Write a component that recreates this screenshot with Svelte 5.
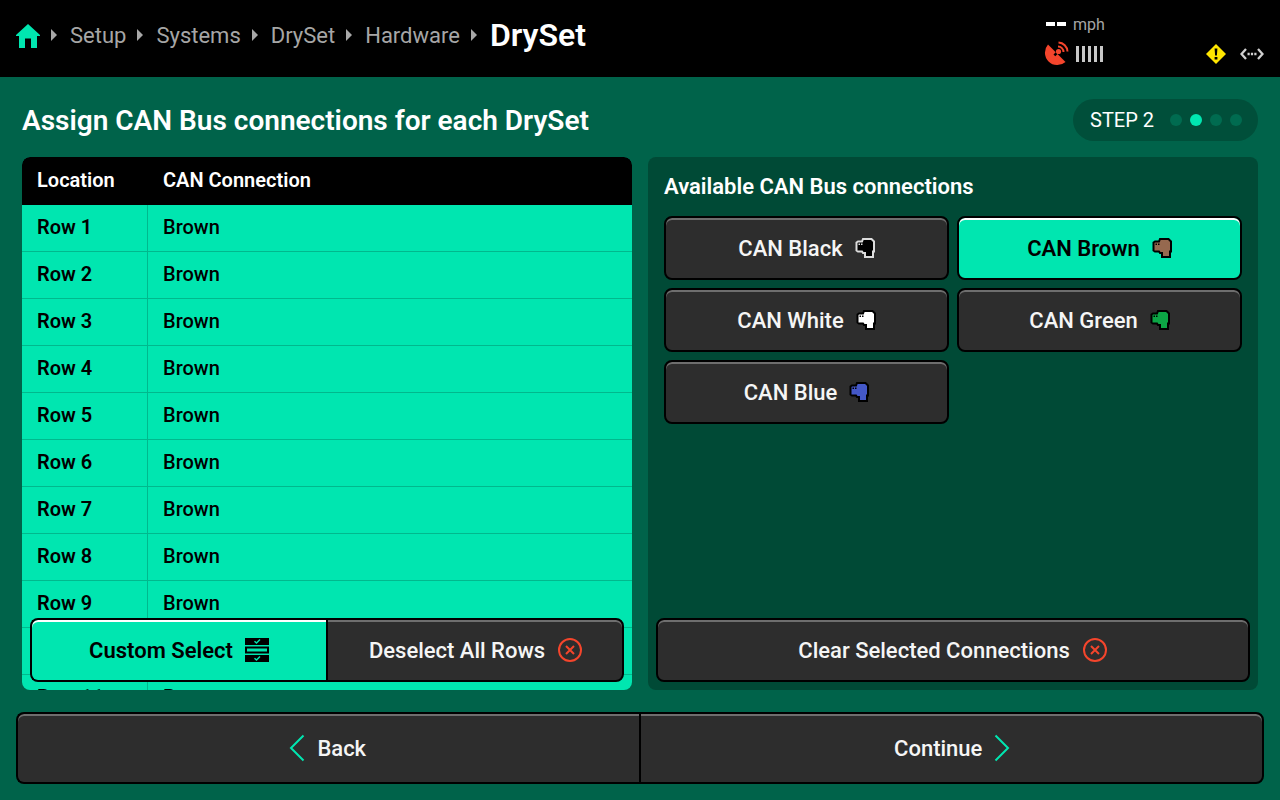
<script>
  const crumbs = ['Setup', 'Systems', 'DrySet', 'Hardware'];
  const rows = [1, 2, 3, 4, 5, 6, 7, 8, 9, 10, 11];
  const cables = [
    { name: 'CAN Black', fill: '#000', stroke: '#ddd' },
    { name: 'CAN Brown', fill: '#96694f', stroke: '#000', active: true },
    { name: 'CAN White', fill: '#fff', stroke: '#000' },
    { name: 'CAN Green', fill: '#0ca545', stroke: '#000' },
    { name: 'CAN Blue', fill: '#4458c8', stroke: '#000' }
  ];
</script>

{#snippet xcircle()}
  <svg class="xc" width="26" height="26" viewBox="0 0 26 26" fill="none" stroke="#f4452c">
    <circle cx="13" cy="13" r="11" stroke-width="2" />
    <path d="M9 9l8 8M17 9l-8 8" stroke-width="2" />
  </svg>
{/snippet}

<div class="app">
  <header class="top">
    <nav class="crumbs">
      <svg class="home" width="24" height="24" viewBox="0 0 24 24"><path fill="#00e6b0" d="M12 0 24 11V12H21V24H15V14.500H9V24H3V12H0V11Z" /></svg>
      {#each crumbs as c}
        <svg class="tri" width="6" height="12" viewBox="0 0 6 12"><path fill="#a8a8a8" d="M0 0l6 6-6 6z" /></svg>
        <span class="crumb">{c}</span>
      {/each}
      <svg class="tri" width="6" height="12" viewBox="0 0 6 12"><path fill="#a8a8a8" d="M0 0l6 6-6 6z" /></svg>
      <span class="current">DrySet</span>
    </nav>
    <div class="status">
      <div class="speed"><i></i><i></i><span>mph</span></div>
      <div class="gps">
        <svg width="26" height="26" viewBox="0 0 26 26">
          <path fill="#f4452c" d="M5 3.500 22.500 21A12.400 12.400 0 0 1 5 3.500Z" />
          <path fill="#000" d="M10.500 13.500l4-4 1.800 1.800-4 4z" />
          <circle cx="15.500" cy="10.500" r="2.600" fill="#f4452c" />
          <path fill="none" stroke="#f4452c" stroke-width="2" d="M15 5.500A5.500 5.500 0 0 1 20.500 11M15.500 1.500A9.500 9.500 0 0 1 24.500 10.500" />
        </svg>
        <div class="bars"><b></b><b></b><b></b><b></b><b></b></div>
      </div>
    </div>
    <svg class="warn" width="20" height="20" viewBox="0 0 20 20">
      <path fill="#ffe600" d="M10 0 20 10 10 20 0 10Z" />
      <path fill="#000" d="M8.600 4.500h2.800l-.5 7H9.100zM8.600 13h2.800v2.500H8.600z" />
    </svg>
    <svg class="link" width="24" height="12" viewBox="0 0 24 12" fill="none" stroke="#d0d0d0" stroke-width="2.300">
      <path d="M6 1 1.500 6 6 11M18 1l4.500 5L18 11" />
      <path d="M7.500 6h2.200M10.900 6h2.200M14.300 6h2.200" stroke-width="2.600" />
    </svg>
  </header>

  <main class="main">
    <div class="titlebar">
      <h1>Assign CAN Bus connections for each DrySet</h1>
      <div class="step">
        <span>STEP 2</span>
        <div class="dots"><i></i><i class="on"></i><i></i><i></i></div>
      </div>
    </div>

    <div class="panels">
      <section class="panel left">
        <div class="thead"><div class="c1">Location</div><div class="c2">CAN Connection</div></div>
        {#each rows as r}
          <div class="row"><div class="c1">Row {r}</div><div class="c2">Brown</div></div>
        {/each}
        <div class="floating">
          <button class="btn seg-l active">
            Custom Select
            <svg width="24" height="24" viewBox="0 0 24 24">
              <rect y="0" width="24" height="7" fill="#000" />
              <rect x="1" y="9.500" width="22" height="5" fill="none" stroke="#000" stroke-width="2" />
              <rect y="17" width="24" height="7" fill="#000" />
              <path d="M9.500 3.200l2 1.800 3.500-3.500M9.500 20.200l2 1.800 3.500-3.500" fill="none" stroke="#00e6b0" stroke-width="1.500" />
            </svg>
          </button>
          <button class="btn seg-r">Deselect All Rows {@render xcircle()}</button>
        </div>
      </section>

      <section class="panel right">
        <h2>Available CAN Bus connections</h2>
        <div class="grid">
          {#each cables as c}
            <button class="btn can" class:active={c.active}>
              {c.name}
              <svg width="22" height="22" viewBox="0 0 22 22">
                <path fill={c.fill} stroke={c.stroke} stroke-width="2" stroke-linejoin="miter" d="M1.500 5.500 3 4.500H7L8 2H16.500L19 4.500V14.500H18V20H10V16H8L7 14.500H3L1.500 13.500Z" />
                <path fill={c.stroke === '#000' ? '#000' : '#ddd'} d="M3.500 6.500h1.500v1.500h-1.500zM6 6.500h1.500v1.500h-1.500z" />
              </svg>
            </button>
          {/each}
        </div>
        <button class="btn clear">Clear Selected Connections {@render xcircle()}</button>
      </section>
    </div>

    <footer class="foot">
      <button class="btn nav nav-l">
        <svg width="16" height="28" viewBox="0 0 16 28" fill="none" stroke="#00e6b0" stroke-width="2"><path d="M14.500 1.500 2 14l12.500 12.500" /></svg>
        Back
      </button>
      <button class="btn nav nav-r">
        Continue
        <svg width="16" height="28" viewBox="0 0 16 28" fill="none" stroke="#00e6b0" stroke-width="2"><path d="M1.500 1.500 14 14 1.500 26.500" /></svg>
      </button>
    </footer>
  </main>
</div>

<style>
  :global(body) { margin: 0; background: #00634a; }
  .app {
    width: 1280px; height: 800px; overflow: hidden;
    display: flex; flex-direction: column;
    font-family: Roboto, "Liberation Sans", sans-serif;
    background: #00634a; color: #fff;
  }
  .top {
    height: 77px; flex: none; background: #000;
    display: flex; align-items: center; padding: 0 16px;
    box-sizing: border-box;
  }
  .crumbs { display: flex; align-items: center; flex: 1; height: 100%; box-sizing: border-box; padding-bottom: 7px; }
  .home { margin-right: 11px; margin-top: 2px; }
  .tri { margin-right: 13px; }
  .crumb { font-size: 22px; color: #a6a6a6; margin-right: 11px; }
  .current { font-size: 32px; font-weight: 600; color: #fff; }
  .status { width: 136px; margin-right: 24px; align-self: stretch; padding-top: 15px; box-sizing: border-box; }
  .speed { display: flex; align-items: center; height: 18px; }
  .speed i { width: 9px; height: 4px; background: #fff; margin-right: 2px; }
  .speed i + i { margin-right: 7px; }
  .speed span { font-size: 16px; color: #a6a6a6; }
  .gps { display: flex; align-items: center; gap: 7px; margin-top: 8px; margin-left: -3px; }
  .bars { display: flex; gap: 3px; }
  .bars b { width: 3px; height: 16px; background: #c8c8c8; }
  .warn { margin-top: 31px; margin-right: 14px; }
  .link { margin-top: 30px; }

  .main { flex: 1; display: flex; flex-direction: column; min-height: 0; padding: 0 22px; }
  .titlebar { display: flex; align-items: center; justify-content: space-between; height: 42px; margin-top: 22px; }
  h1 { margin: 0; padding-top: 2px; font-size: 28px; font-weight: 600; line-height: 42px; }
  .step {
    width: 185px; height: 42px; border-radius: 21px; background: #004f3a;
    display: flex; align-items: center; box-sizing: border-box; padding-left: 17px;
    font-size: 20px;
  }
  .dots { display: flex; gap: 8px; margin-left: 16px; }
  .dots i { width: 12px; height: 12px; border-radius: 50%; background: #006b50; }
  .dots i.on { background: #00e6b0; }

  .panels { display: flex; gap: 16px; margin-top: 16px; height: 533px; }
  .panel { width: 610px; border-radius: 8px; overflow: hidden; position: relative; box-sizing: border-box; }
  .left { background: #00e6b0; color: #000; }
  .thead, .row { display: flex; font-size: 20px; align-items: center; }
  .thead { height: 48px; background: #000; color: #fff; }
  .row { height: 47px; box-sizing: border-box; border-bottom: 1px solid #00b98d; }
  .c1, .c2 { height: 100%; box-sizing: border-box; padding: 0 0 2px 15px; display: flex; align-items: center; }
  .c1 { width: 126px; border-right: 1px solid #00b98d; font-weight: 600; }
  .c2 { font-weight: 500; }
  .thead .c1, .thead .c2 { font-weight: 600; border: 0; }

  .btn {
    font: inherit; font-size: 22px; font-weight: 500; color: #f5f5f5; cursor: pointer;
    background: #2d2d2d; border: 2px solid #000; border-radius: 8px;
    box-shadow: inset 0 2px 0 #6e6e6e;
    display: flex; align-items: center; justify-content: center; gap: 12px;
    box-sizing: border-box; padding: 0; margin: 0;
  }
  .btn.active { background: #00e6b0; color: #000; font-weight: 600; box-shadow: inset 0 2px 0 #fff; }
  .floating { position: absolute; left: 8px; right: 8px; bottom: 8px; height: 64px; display: flex; }
  .seg-l { width: 296px; border-radius: 8px 0 0 8px; border-right: 0; }
  .seg-r { flex: 1; border-radius: 0 8px 8px 0; padding-left: 2px; }
  .xc { flex: none; }

  .right { background: #004a36; padding: 16px 8px 8px; display: flex; flex-direction: column; }
  h2 { margin: 0 8px; font-size: 22px; font-weight: 600; line-height: 27px; }
  .grid { display: grid; grid-template-columns: 285px 285px; gap: 8px; margin: 16px 8px 0; }
  .can { height: 64px; padding-left: 2px; }
  .clear { margin-top: auto; height: 64px; width: 594px; flex: none; }

  .foot { display: flex; margin: 22px -6px 0; height: 72px; }
  .nav { flex: 1; }
  .nav-l { border-radius: 8px 0 0 8px; border-right: 0; padding-right: 1px; }
  .nav-r { border-radius: 0 8px 8px 0; padding-left: 2px; }
</style>
